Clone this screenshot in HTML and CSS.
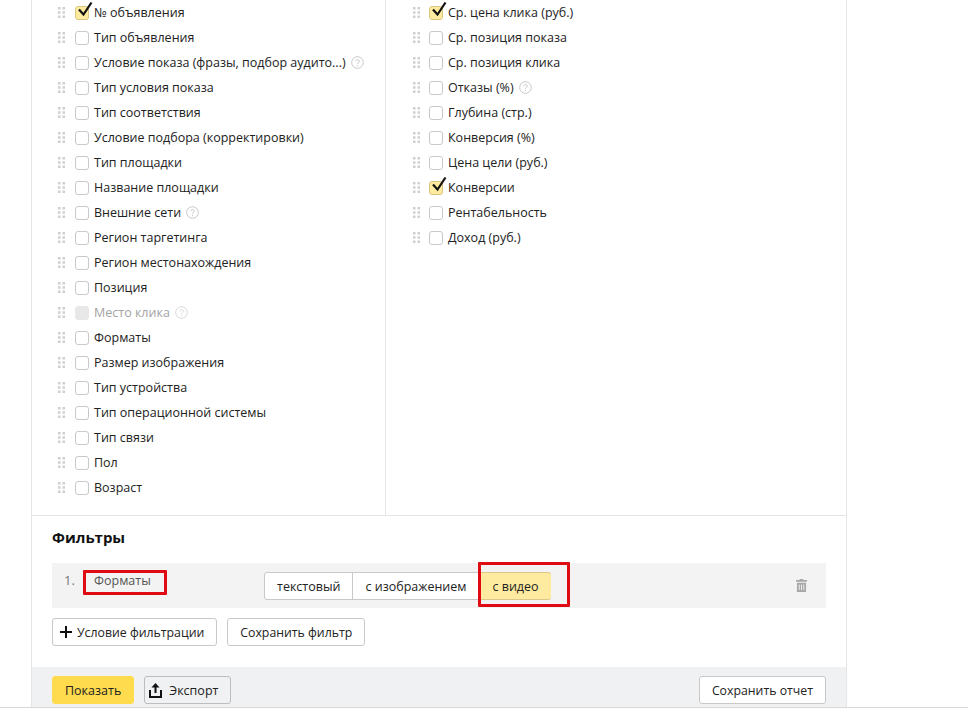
FILE: index.html
```html
<!DOCTYPE html>
<html lang="ru">
<head>
<meta charset="utf-8">
<title>Отчет</title>
<link rel="stylesheet" href="styles.css">
</head>
<body>
<svg class="defs" width="0" height="0" aria-hidden="true">
  <symbol id="grip" viewBox="0 0 7 11"><path d="M0 0h2.500v2.500H0zM4.500 0h2.500v2.500H4.500zM0 4.250h2.500v2.500H0zM4.500 4.250h2.500v2.500H4.500zM0 8.500h2.500v2.500H0zM4.500 8.500h2.500v2.500H4.500z" fill="#cfcfcf"/></symbol>
  <symbol id="tick" viewBox="0 0 18 18"><path d="M4 9.500 8.500 14.500 16.500 2.500" fill="none" stroke="#111" stroke-width="2.200"/></symbol>
  <symbol id="help" viewBox="0 0 13 13"><circle cx="6.500" cy="6.500" r="5.800" fill="none" stroke="#c8c8c8"/><path d="M4.800 5.200c0-2.200 3.500-2.200 3.500-.1 0 1.300-1.800 1.300-1.800 2.700M6.500 9v1.200" fill="none" stroke="#c8c8c8"/></symbol>
</svg>
<main class="panel">
  <section class="columns">
    <div class="col col-left">
      <div class="row"><svg class="grip"><use href="#grip"/></svg><span class="box on"><svg class="tick"><use href="#tick"/></svg></span><span>№ объявления</span></div>
      <div class="row"><svg class="grip"><use href="#grip"/></svg><span class="box"></span><span>Тип объявления</span></div>
      <div class="row"><svg class="grip"><use href="#grip"/></svg><span class="box"></span><span>Условие показа (фразы, подбор аудито...)</span><svg class="help"><use href="#help"/></svg></div>
      <div class="row"><svg class="grip"><use href="#grip"/></svg><span class="box"></span><span>Тип условия показа</span></div>
      <div class="row"><svg class="grip"><use href="#grip"/></svg><span class="box"></span><span>Тип соответствия</span></div>
      <div class="row"><svg class="grip"><use href="#grip"/></svg><span class="box"></span><span>Условие подбора (корректировки)</span></div>
      <div class="row"><svg class="grip"><use href="#grip"/></svg><span class="box"></span><span>Тип площадки</span></div>
      <div class="row"><svg class="grip"><use href="#grip"/></svg><span class="box"></span><span>Название площадки</span></div>
      <div class="row"><svg class="grip"><use href="#grip"/></svg><span class="box"></span><span>Внешние сети</span><svg class="help"><use href="#help"/></svg></div>
      <div class="row"><svg class="grip"><use href="#grip"/></svg><span class="box"></span><span>Регион таргетинга</span></div>
      <div class="row"><svg class="grip"><use href="#grip"/></svg><span class="box"></span><span>Регион местонахождения</span></div>
      <div class="row"><svg class="grip"><use href="#grip"/></svg><span class="box"></span><span>Позиция</span></div>
      <div class="row disabled"><svg class="grip"><use href="#grip"/></svg><span class="box off"></span><span>Место клика</span><svg class="help"><use href="#help"/></svg></div>
      <div class="row"><svg class="grip"><use href="#grip"/></svg><span class="box"></span><span>Форматы</span></div>
      <div class="row"><svg class="grip"><use href="#grip"/></svg><span class="box"></span><span>Размер изображения</span></div>
      <div class="row"><svg class="grip"><use href="#grip"/></svg><span class="box"></span><span>Тип устройства</span></div>
      <div class="row"><svg class="grip"><use href="#grip"/></svg><span class="box"></span><span>Тип операционной системы</span></div>
      <div class="row"><svg class="grip"><use href="#grip"/></svg><span class="box"></span><span>Тип связи</span></div>
      <div class="row"><svg class="grip"><use href="#grip"/></svg><span class="box"></span><span>Пол</span></div>
      <div class="row"><svg class="grip"><use href="#grip"/></svg><span class="box"></span><span>Возраст</span></div>
    </div>
    <div class="col col-right">
      <div class="row"><svg class="grip"><use href="#grip"/></svg><span class="box on"><svg class="tick"><use href="#tick"/></svg></span><span>Ср. цена клика (руб.)</span></div>
      <div class="row"><svg class="grip"><use href="#grip"/></svg><span class="box"></span><span>Ср. позиция показа</span></div>
      <div class="row"><svg class="grip"><use href="#grip"/></svg><span class="box"></span><span>Ср. позиция клика</span></div>
      <div class="row"><svg class="grip"><use href="#grip"/></svg><span class="box"></span><span>Отказы (%)</span><svg class="help"><use href="#help"/></svg></div>
      <div class="row"><svg class="grip"><use href="#grip"/></svg><span class="box"></span><span>Глубина (стр.)</span></div>
      <div class="row"><svg class="grip"><use href="#grip"/></svg><span class="box"></span><span>Конверсия (%)</span></div>
      <div class="row"><svg class="grip"><use href="#grip"/></svg><span class="box"></span><span>Цена цели (руб.)</span></div>
      <div class="row"><svg class="grip"><use href="#grip"/></svg><span class="box on"><svg class="tick"><use href="#tick"/></svg></span><span>Конверсии</span></div>
      <div class="row"><svg class="grip"><use href="#grip"/></svg><span class="box"></span><span>Рентабельность</span></div>
      <div class="row"><svg class="grip"><use href="#grip"/></svg><span class="box"></span><span>Доход (руб.)</span></div>
    </div>
  </section>
  <section class="filters">
    <h2 class="filters-title">Фильтры</h2>
    <div class="filter-row">
      <span class="filter-num">1.</span>
      <span class="filter-name">Форматы</span>
      <div class="segments">
        <span class="seg">текстовый</span>
        <span class="seg">с изображением</span>
        <span class="seg seg-on">с видео</span>
      </div>
      <svg class="trash" viewBox="0 0 12 14"><path d="M4 0h4v1h4v2H0V1h4zM1 4h10v10H1zM3 6v6h1V6zM5.500 6v6h1V6zM8 6v6h1V6z" fill="#a8a8a8" fill-rule="evenodd"/></svg>
    </div>
    <div class="filter-actions">
      <button class="btn btn-add"><svg class="plus" viewBox="0 0 12 12"><path d="M5 0h2v5h5v2H7v5H5V7H0V5h5z" fill="#111"/></svg>Условие фильтрации</button>
      <button class="btn">Сохранить фильтр</button>
    </div>
  </section>
  <footer class="footer">
    <button class="btn btn-yellow">Показать</button>
    <button class="btn btn-grey"><svg class="export" viewBox="0 0 13 15"><path d="M6.500 0 10.500 4.500H7.500V10h-2V4.500H2.500zM0 7h2v6h9V7h2v8H0z" fill="#111"/></svg>Экспорт</button>
    <button class="btn btn-save">Сохранить отчет</button>
  </footer>
  <span class="mark mark-name"></span>
  <span class="mark mark-video"></span>
</main>
</body>
</html>
```

FILE: styles.css
```css
* { box-sizing: border-box; }
html, body { margin: 0; height: 708px; overflow: hidden; background: #fff; }
body {
  font-family: "Open Sans", "Noto Sans", sans-serif;
  font-size: 12.5px;
  color: #222;
  border-bottom: 1px solid #d8d8d8;
}
.defs { position: absolute; }
.panel {
  position: relative;
  margin-left: 31px;
  width: 816px;
  height: 707px;
  border-left: 1px solid #e5e5e5;
  border-right: 1px solid #e5e5e5;
  display: flex;
  flex-direction: column;
}
.columns {
  display: flex;
  height: 516px;
  border-bottom: 1px solid #e5e5e5;
}
.col { display: flex; flex-direction: column; }
.col-left { width: 354px; padding-left: 26px; border-right: 1px solid #e5e5e5; }
.col-right { padding-left: 27px; }
.row {
  height: 25px;
  display: flex;
  align-items: center;
  white-space: nowrap;
}
.grip { width: 7px; height: 11px; margin-right: 10px; }
.col-right .grip { margin-right: 9px; }
.box {
  position: relative;
  width: 14px;
  height: 14px;
  margin-right: 5px;
  border: 1px solid #c9c9c9;
  border-radius: 3px;
  background: #fff;
  flex: none;
}
.box.on { background: #ffeba0; border-color: #d9c67e; }
.box.off { background: #e8e8e8; border-color: #e8e8e8; }
.tick { position: absolute; left: -1px; top: -7px; width: 18px; height: 18px; }
.help { width: 13px; height: 13px; margin-left: 5px; }
.disabled { color: #a3a3a3; }
.disabled .help { opacity: .7; }
.filters { flex: 1; padding: 0 20px; }
.filters-title {
  margin: 11px 0 16px;
  font-size: 15px;
  line-height: 20px;
  font-weight: 700;
  color: #111;
}
.filter-row {
  position: relative;
  height: 45px;
  background: #f3f3f3;
  display: flex;
  align-items: flex-start;
}
.filter-num { width: 32px; padding: 8px 0 0 12px; color: #777; line-height: 18px; font-size: 13px; }
.filter-name { width: 180px; padding: 9px 0 0 10px; color: #555; line-height: 18px; }
.segments {
  display: flex;
  margin-top: 9px;
  height: 28px;
  border: 1px solid #c8c8c8;
  border-radius: 3px;
  background: #fff;
}
.seg {
  display: flex;
  align-items: center;
  padding: 0 12px;
  border-right: 1px solid #c8c8c8;
}
.seg:last-child { border-right: 0; }
.seg-on { background: #ffeba0; margin: -1px -1px -1px 0; border: 1px solid #dcc987; border-radius: 0 3px 3px 0; }
.trash { position: absolute; right: 19px; top: 16px; width: 11px; height: 13px; }
.filter-actions { display: flex; gap: 10px; margin-top: 10px; }
.btn {
  height: 28px;
  padding: 0 12px;
  font: inherit;
  font-size: 12.3px;
  color: #222;
  background: #fff;
  border: 1px solid #c8c8c8;
  border-radius: 3px;
  display: inline-flex;
  align-items: center;
}
.plus { width: 12px; height: 12px; margin: 0 5px 0 -5px; }
.footer {
  height: 40px;
  background: #f0f1f2;
  padding: 9px 20px 0;
  display: flex;
  align-items: flex-start;
  gap: 10px;
}
.btn-yellow { background: #ffdb4d; border-color: #ffdb4d; font-size: 12.5px; }
.btn-grey { background: #f0f1f2; border-color: #bdbdbd; padding: 0 12px 0 4px; font-size: 12.5px; }
.export { width: 13px; height: 15px; margin: 0 7px 0 0; }
.btn-save { margin-left: auto; }
.mark { position: absolute; border: 3px solid #e00b12; border-radius: 1px; }
.mark-name { left: 51px; top: 570px; width: 84px; height: 25px; }
.mark-video { left: 446px; top: 562px; width: 92px; height: 45px; }
```
